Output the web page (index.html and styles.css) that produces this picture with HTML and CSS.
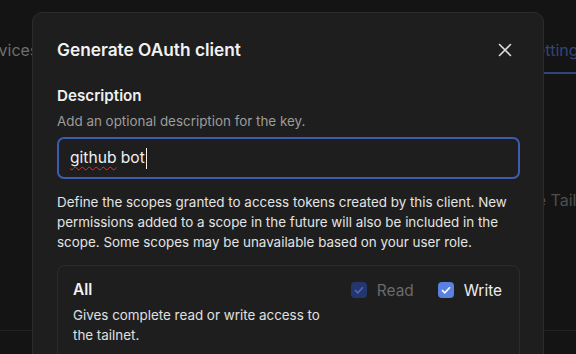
FILE: index.html
```html
<!DOCTYPE html>
<html>

<head>
	<title>Generate OAuth client</title>
	<link rel="stylesheet" href="styles.css">
</head>

<body>

	<div class="page">
		<nav class="tabs">
			<a class="tab">Devices</a>
			<a class="tab active">Settings</a>
		</nav>
		<div class="page_row">
			<p class="page_text">the Tailnet name</p>
		</div>
		<div class="page_rule"></div>
	</div>

	<div class="modal">
		<div class="modal_head">
			<h2 class="modal_title">Generate OAuth client</h2>
			<button class="close_btn" title="Close">
				<svg width="14" height="14" viewBox="0 0 14 14">
					<path d="M1.5 1.5 L12.5 12.5 M12.5 1.5 L1.5 12.5" stroke="#dcdcdc" stroke-width="1.6" stroke-linecap="round" />
				</svg>
			</button>
		</div>

		<div class="field_label">Description</div>
		<div class="field_hint">Add an optional description for the key.</div>
		<div class="text_input"><span class="spell">github</span> bot<span class="caret"></span></div>

		<p class="scope_info">Define the scopes granted to access tokens created by this client. New permissions added to a scope in the future will also be included in the scope. Some scopes may be unavailable based on your user role.</p>

		<div class="scope_card">
			<div class="scope_left">
				<div class="scope_name">All</div>
				<div class="scope_desc">Gives complete read or write access to the tailnet.</div>
			</div>
			<div class="scope_checks">
				<label class="check disabled">
					<span class="box">
						<svg width="10" height="8" viewBox="0 0 10 8"><path d="M1 4.2 L3.8 6.8 L9 1.2" fill="none" stroke="#4d69b5" stroke-width="1.6" /></svg>
					</span>
					Read
				</label>
				<label class="check">
					<span class="box">
						<svg width="10" height="8" viewBox="0 0 10 8"><path d="M1 4.2 L3.8 6.8 L9 1.2" fill="none" stroke="#ffffff" stroke-width="1.6" /></svg>
					</span>
					Write
				</label>
			</div>
		</div>
	</div>

</body>

</html>
```

FILE: styles.css
```css
body {
	margin: 0;
	background-color: #141414;
	font-family: Inter, "Noto Sans", sans-serif;
	overflow: hidden;
}

.page {
	height: 354px;
}

.tabs {
	display: flex;
	justify-content: space-between;
	margin: 0 -11px 0 -22px;
}

.tab {
	font-size: 16px;
	line-height: 24px;
	padding: 38px 0 10px;
	color: #6e6e6e;
	border-bottom: 2px solid transparent;
}

.tab.active {
	color: #33447a;
	border-bottom-color: #33447a;
}

.page_row {
	padding: 114px 0 0 522px;
}

.page_text {
	margin: 0;
	white-space: nowrap;
	font-size: 16px;
	line-height: 24px;
	color: #4e4e4e;
}

.page_rule {
	margin-top: 118px;
	border-top: 1px solid #222;
}

/* dialog */
.modal {
	position: absolute;
	left: 32px;
	top: 12px;
	width: 463px;
	height: 420px;
	padding: 23px 23px 0 24px;
	background-color: #1e1e1e;
	border: 1px solid #2c2c2c;
	border-radius: 10px;
	color: #ececec;
}

.modal_head {
	display: flex;
	justify-content: space-between;
	align-items: center;
}

.modal_title {
	margin: 0;
	font-size: 17.3px;
	line-height: 28px;
	font-weight: 600;
	color: #f2f2f2;
}

.close_btn {
	background: none;
	border: none;
	padding: 0;
	margin-right: 8px;
	width: 14px;
	height: 14px;
	display: flex;
}

.field_label {
	margin-top: 22px;
	font-size: 15.2px;
	line-height: 20px;
	font-weight: 600;
	color: #f0f0f0;
}

.field_hint {
	margin-top: 5px;
	font-size: 13.4px;
	line-height: 20px;
	color: #9c9c9c;
}

.text_input {
	margin-top: 6px;
	height: 38px;
	padding: 0 11px;
	border: 2px solid #3c5cae;
	border-radius: 7px;
	font-size: 15.6px;
	line-height: 38px;
	color: #f0f0f0;
}

.spell {
	text-decoration: underline wavy #e03030;
	text-decoration-thickness: 1px;
	text-underline-offset: 3px;
}

.caret {
	display: inline-block;
	width: 1px;
	height: 21px;
	margin-left: 1px;
	background-color: #f0f0f0;
	vertical-align: middle;
}

.scope_info {
	margin: 13px 0 0;
	font-size: 13.4px;
	line-height: 20px;
	color: #e4e4e4;
}

.scope_card {
	margin-top: 13px;
	display: flex;
	justify-content: space-between;
	padding: 12px 17px 20px 15px;
	border: 1px solid #2c2c2c;
	border-radius: 8px;
}

.scope_left {
	width: 262px;
}

.scope_name {
	font-size: 15.4px;
	line-height: 24px;
	font-weight: 600;
	color: #f2f2f2;
}

.scope_desc {
	margin-top: 3px;
	font-size: 13.4px;
	line-height: 20px;
	color: #e0e0e0;
}

.scope_checks {
	display: flex;
	gap: 24px;
	height: 24px;
	align-items: center;
}

.check {
	display: flex;
	align-items: center;
	gap: 10px;
	font-size: 15.4px;
	color: #ededed;
}

.check .box {
	width: 16px;
	height: 16px;
	border-radius: 4px;
	background-color: #5a80e0;
	display: flex;
	align-items: center;
	justify-content: center;
}

.check.disabled {
	color: #6a6a6a;
}

.check.disabled .box {
	background-color: #24366e;
}
```
